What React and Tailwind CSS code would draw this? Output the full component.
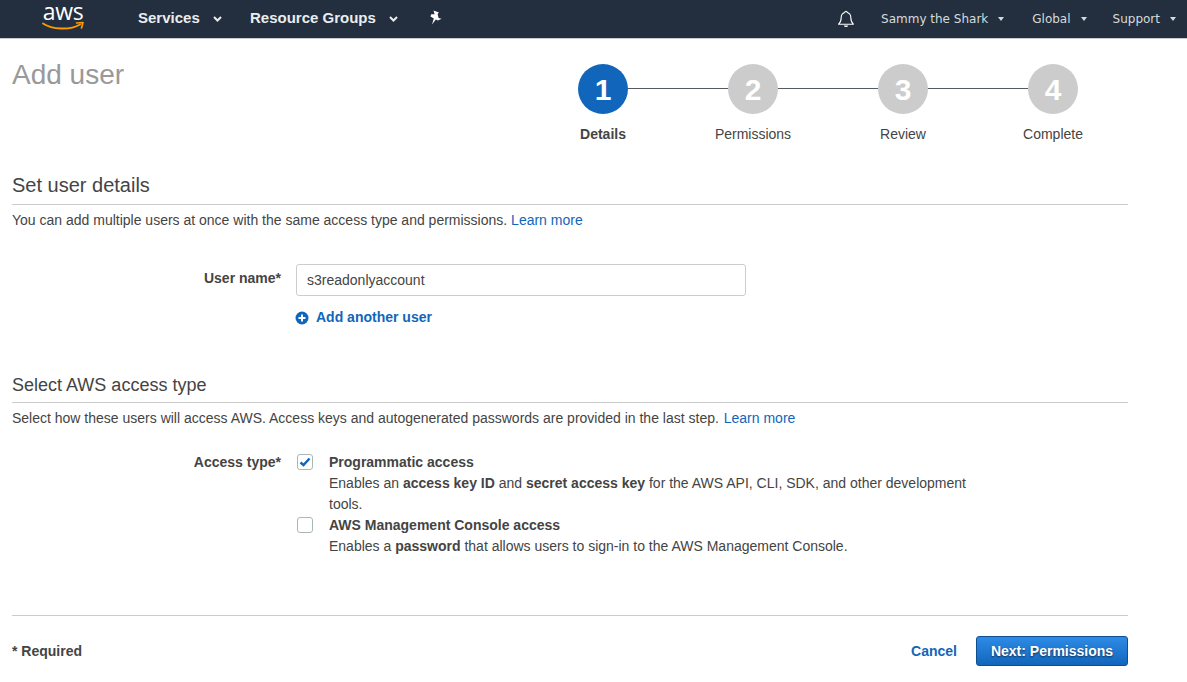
import React from 'react';

const sans = "font-['Liberation_Sans',Arial,sans-serif]";

const AwsLogo = () => (
  <div className="flex flex-col items-center w-[42px] -mt-[6px]">
    <span className="text-white text-[23px] leading-[18px] font-['Open_Sans',sans-serif] tracking-[-0.3px]">aws</span>
    <svg width="42" height="10" viewBox="0 0 42 10" className="mt-[1px]">
      <path d="M1 2.5 C10 8.5 28 9.5 38 3.5" fill="none" stroke="#f90" strokeWidth="1.9" strokeLinecap="round" />
      <path d="M34.5 2 L41 1.5 L39.5 7" fill="none" stroke="#f90" strokeWidth="1.7" strokeLinecap="round" strokeLinejoin="round" />
    </svg>
  </div>
);

const Caret = () => (
  <span className="inline-block w-0 h-0 border-x-[3.5px] border-x-transparent border-t-[4px] border-t-[#d5dbdb]" />
);

const Chevron = () => (
  <svg width="9" height="6" viewBox="0 0 9 6" className="mt-[3px]">
    <path d="M1 1 L4.5 4.5 L8 1" fill="none" stroke="#eaeded" strokeWidth="2" />
  </svg>
);

const NavLink = ({ label, className }) => (
  <div className={`flex items-center gap-[13px] pb-[3px] text-[15px] font-bold text-[#eaeded] ${className}`}>
    {label}
    <Chevron />
  </div>
);

const RightLink = ({ label, className }) => (
  <div className={`flex items-center gap-[10px] font-['DejaVu_Sans',sans-serif] text-[12px] text-[#d5dbdb] ${className}`}>
    {label}
    <Caret />
  </div>
);

const Header = () => (
  <header className={`flex items-center h-[39px] bg-[#232f3e] border-b border-[#c8ccd0] ${sans}`}>
    <div className="ml-[42px] w-[96px]">
      <AwsLogo />
    </div>
    <NavLink label="Services" className="w-[112px]" />
    <NavLink label="Resource Groups" className="w-[179px]" />
    <svg width="14" height="15" viewBox="0 0 14 15" className="-mt-[4px]">
      <path d="M4.5 0.5 L10 2.5 L8.6 4 L9.6 8 L12.5 8.8 L9 10.5 L6.8 9.6 L3 14.5 L4.8 8.4 L1.5 6.6 L2.2 4.2 L5.6 4.2 Z" fill="#fff" />
    </svg>
    <div className="ml-auto flex items-center pr-[11px]">
      <svg width="18" height="18" viewBox="0 0 18 18" className="mr-[26px]">
        <path d="M9 1.2 C9.8 1.2 10.2 1.8 10.2 2.5 C12.6 3.2 13.8 5 13.8 7.5 C13.8 10.5 14.6 12.6 16.4 14.2 L1.6 14.2 C3.4 12.6 4.2 10.5 4.2 7.5 C4.2 5 5.4 3.2 7.8 2.5 C7.8 1.8 8.2 1.2 9 1.2 Z" fill="none" stroke="#fff" strokeWidth="1.1" strokeLinejoin="round" />
        <path d="M6.8 15.4 L11.2 15.4 C10.8 16.6 10 17 9 17 C8 17 7.2 16.6 6.8 15.4 Z" fill="#fff" />
      </svg>
      <RightLink label="Sammy the Shark" className="mr-[28px]" />
      <RightLink label="Global" className="mr-[26px]" />
      <RightLink label="Support" />
    </div>
  </header>
);

const steps = ['Details', 'Permissions', 'Review', 'Complete'];

const Stepper = () => (
  <div className="w-[600px] ml-auto">
    <div className="flex items-center px-[50px]">
      {steps.map((s, i) => (
        <React.Fragment key={s}>
          {i > 0 && <div className="h-px w-[100px] -mt-[1px] bg-[#545b64]" />}
          <div className={`w-[50px] h-[50px] shrink-0 rounded-full flex items-center justify-center text-white text-[30px] font-bold ${i === 0 ? 'bg-[#1166bb]' : 'bg-[#cccccc]'}`}>
            {i + 1}
          </div>
        </React.Fragment>
      ))}
    </div>
    <div className="grid grid-cols-4 mt-[10px]">
      {steps.map((s, i) => (
        <div key={s} className={`text-center text-[14px] leading-[20px] text-[#444] ${i === 0 ? 'font-bold' : ''}`}>
          {s}
        </div>
      ))}
    </div>
  </div>
);

const Checkbox = ({ checked }) => (
  <div className="w-[16px] h-[16px] mt-[2px] shrink-0 rounded-[3px] border border-[#aab7b8] bg-white flex items-center justify-center">
    {checked && (
      <svg width="12" height="10" viewBox="0 0 12 10">
        <path d="M1.5 5.5 L4.5 8 L10.5 1.5" fill="none" stroke="#1166bb" strokeWidth="2.4" />
      </svg>
    )}
  </div>
);

export default function App() {
  return (
    <div className={`h-[682px] bg-white overflow-hidden text-[#444] text-[14px] leading-[21px] ${sans}`}>
      <Header />
      <main className="w-[1116px] ml-[12px]">
        <div className="flex items-start pt-[25px]">
          <h1 className="text-[28px] leading-[22px] text-[#999]">Add user</h1>
          <Stepper />
        </div>

        <section className="mt-[27px]">
          <h2 className="text-[20px] leading-[28px] pb-[5px] border-b border-[#cccccc]">Set user details</h2>
          <p className="mt-[5px]">
            You can add multiple users at once with the same access type and permissions.{' '}
            <span className="text-[#1166bb]">Learn more</span>
          </p>
        </section>

        <div className="flex mt-[33px]">
          <label className="w-[269px] text-right font-bold pt-[4px]">User name*</label>
          <div className="ml-[15px]">
            <div className="w-[450px] h-[32px] px-[10px] flex items-center border border-[#cccccc] rounded-[3px] text-[14px]">
              s3readonlyaccount
            </div>
            <div className="flex items-center gap-[7px] -ml-[1px] mt-[11px] font-bold text-[#1166bb]">
              <svg width="14" height="14" viewBox="0 0 14 14">
                <circle cx="7" cy="7" r="6.5" fill="#1166bb" />
                <path d="M7 3.5 V10.5 M3.5 7 H10.5" stroke="#fff" strokeWidth="2" />
              </svg>
              Add another user
            </div>
          </div>
        </div>

        <section className="mt-[44px]">
          <h2 className="text-[18px] leading-[26px] pb-[4px] border-b border-[#cccccc]">Select AWS access type</h2>
          <p className="mt-[5px]">
            Select how these users will access AWS. Access keys and autogenerated passwords are provided in the last step.{' '}
            <span className="ml-px text-[#1166bb]">Learn more</span>
          </p>
        </section>

        <div className="flex mt-[23px]">
          <label className="w-[269px] text-right font-bold">Access type*</label>
          <div className="ml-[16px] w-[680px] flex flex-col">
            <div className="flex gap-[16px]">
              <Checkbox checked />
              <div>
                <div className="font-bold">Programmatic access</div>
                <div>
                  Enables an <b>access key ID</b> and <b>secret access key</b> for the AWS API, CLI, SDK, and other development tools.
                </div>
              </div>
            </div>
            <div className="flex gap-[16px]">
              <Checkbox />
              <div>
                <div className="font-bold">AWS Management Console access</div>
                <div>
                  Enables a <b>password</b> that allows users to sign-in to the AWS Management Console.
                </div>
              </div>
            </div>
          </div>
        </div>

        <div className="mt-[58px] border-t border-[#cccccc] pt-[20px] flex items-center justify-between">
          <span className="font-bold">* Required</span>
          <div className="flex items-center gap-[19px]">
            <span className="font-bold text-[#1166bb]">Cancel</span>
            <button className="w-[152px] h-[30px] rounded-[3px] border border-[#0e4f8f] bg-gradient-to-b from-[#2e8be6] to-[#1166bb] text-white font-bold [text-shadow:0_1px_2px_rgba(0,0,0,0.6)]">
              Next: Permissions
            </button>
          </div>
        </div>
      </main>
    </div>
  );
}
